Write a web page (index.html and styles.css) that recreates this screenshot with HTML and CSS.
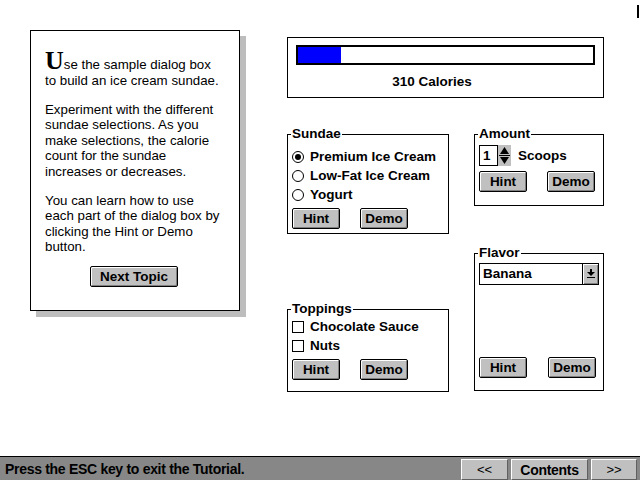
FILE: index.html
```html
<!DOCTYPE html>
<html>
<head>
<meta charset="utf-8">
<title>Ice Cream Sundae Tutorial</title>
<link rel="stylesheet" href="styles.css">
</head>
<body>
<div class="screen">
  <main class="stage">
    <section class="intro">
      <p><span class="dropcap">U</span>se the sample dialog box<br>to build an ice cream sundae.</p>
      <p>Experiment with the different<br>sundae selections. As you<br>make selections, the calorie<br>count for the sundae<br>increases or decreases.</p>
      <p class="last">You can learn how to use<br>each part of the dialog box by<br>clicking the Hint or Demo<br>button.</p>
      <button class="btn btn-wide">Next Topic</button>
    </section>

    <section class="workspace">
      <div class="calories">
        <div class="meter"><div class="meter-fill" style="width:14.6%"></div></div>
        <div class="calories-label">310 Calories</div>
      </div>

      <div class="groups">
        <div class="col col-left">
          <div class="group sundae">
            <span class="group-title">Sundae</span>
            <div class="option"><span class="radio checked"></span>Premium Ice Cream</div>
            <div class="option"><span class="radio"></span>Low-Fat Ice Cream</div>
            <div class="option"><span class="radio"></span>Yogurt</div>
            <div class="buttons"><button class="btn">Hint</button><button class="btn">Demo</button></div>
          </div>
          <div class="group toppings">
            <span class="group-title">Toppings</span>
            <div class="option"><span class="check"></span>Chocolate Sauce</div>
            <div class="option"><span class="check"></span>Nuts</div>
            <div class="buttons"><button class="btn">Hint</button><button class="btn">Demo</button></div>
          </div>
        </div>

        <div class="col col-right">
          <div class="group amount">
            <span class="group-title">Amount</span>
            <div class="spin-row">
              <span class="spin-edit">1</span>
              <span class="spinner">
                <svg width="13" height="21" viewBox="0 0 13 21"><polygon points="6.5,2 11,9 2,9" fill="#000"/><line x1="1" y1="10.5" x2="12" y2="10.5" stroke="#000" stroke-width="1"/><polygon points="2,12 11,12 6.5,19" fill="#000"/></svg>
              </span>
              <span class="spin-label">Scoops</span>
            </div>
            <div class="buttons buttons-amount"><button class="btn">Hint</button><button class="btn">Demo</button></div>
          </div>
          <div class="group flavor">
            <span class="group-title">Flavor</span>
            <div class="combo">
              <span class="combo-value">Banana</span>
              <span class="combo-btn">
                <svg width="8" height="10" viewBox="0 0 8 10"><rect x="3" y="0" width="2" height="3" fill="#000"/><polygon points="0,3 8,3 4,7" fill="#000"/><rect x="0" y="8" width="8" height="1" fill="#000"/></svg>
              </span>
            </div>
            <div class="buttons buttons-bottom"><button class="btn">Hint</button><button class="btn">Demo</button></div>
          </div>
        </div>
      </div>
    </section>
  </main>

  <footer class="statusbar">
    <span class="status-text">Press the ESC key to exit the Tutorial.</span>
    <nav class="nav">
      <button class="nav-btn nav-prev">&lt;&lt;</button>
      <button class="nav-btn nav-contents">Contents</button>
      <button class="nav-btn nav-next">&gt;&gt;</button>
    </nav>
  </footer>
</div>
<span class="caret"></span>
</body>
</html>
```

FILE: styles.css
```css
* { box-sizing: border-box; }
html, body { margin: 0; padding: 0; }
body {
  width: 640px;
  height: 480px;
  overflow: hidden;
  position: relative;
  background: #fff;
  color: #000;
  font-family: "Liberation Sans", Arial, sans-serif;
  font-size: 13px;
}
.screen { display: flex; flex-direction: column; height: 480px; }
.stage {
  height: 456px;
  display: flex;
  align-items: flex-start;
  gap: 47px;
  padding: 30px 0 0 30px;
}

/* Intro panel */
.intro {
  width: 210px;
  height: 281px;
  border: 1px solid #000;
  box-shadow: 6px 6px 0 #bdbdbd;
  padding: 26px 2px 0 14px;
  font-size: 13.3px;
  line-height: 15.5px;
  background: #fff;
}
.intro p { margin: 0 0 13.5px; white-space: nowrap; }
.intro p.last { margin-bottom: 11px; }
.dropcap {
  font-family: "Liberation Serif", "Times New Roman", serif;
  font-weight: bold;
  font-size: 26px;
  line-height: 0;
}

/* Buttons */
.btn {
  width: 48px;
  height: 21px;
  padding: 0;
  background: #c0c0c0;
  border: 1px solid #000;
  border-radius: 2px;
  box-shadow: inset 1px 1px 0 #fff, inset -1px -1px 0 #808080;
  font-family: "Liberation Sans", Arial, sans-serif;
  font-weight: bold;
  font-size: 13.5px;
  color: #000;
  display: flex;
  align-items: center;
  justify-content: center;
}
.btn-wide { width: 88px; margin-left: 45px; }

/* Workspace */
.workspace {
  width: 317px;
  padding-top: 7px;
  display: flex;
  flex-direction: column;
}
.calories {
  height: 61px;
  border: 1px solid #000;
  padding: 7px 8px 0;
}
.meter {
  height: 20px;
  border: 2px solid #000;
  background: #fff;
}
.meter-fill { height: 100%; background: #0000ff; }
.calories-label {
  margin-top: 9px;
  line-height: 16px;
  font-weight: bold;
  font-size: 13.5px;
  text-align: center;
  padding-right: 27px;
}

.groups { display: flex; gap: 25px; margin-top: 36px; font-size: 13.5px; }
.col { display: flex; flex-direction: column; }
.col-left { width: 162px; }
.col-right { width: 130px; }

.group {
  position: relative;
  border: 1px solid #000;
  padding-left: 4px;
}
.group-title {
  position: absolute;
  top: -9px;
  left: 3px;
  padding: 0 1px;
  background: #fff;
  font-weight: bold;
  line-height: 16px;
}
.sundae { height: 100px; padding-top: 12px; }
.toppings { height: 83px; margin-top: 75px; padding-top: 7px; }
.amount { height: 72px; padding-top: 10px; }
.flavor {
  height: 138px;
  margin-top: 47px;
  padding-top: 9px;
  padding-bottom: 12px;
  display: flex;
  flex-direction: column;
}

.option {
  display: flex;
  align-items: center;
  gap: 6px;
  height: 19px;
  font-weight: bold;
  white-space: nowrap;
}
.radio {
  position: relative;
  width: 12px;
  height: 12px;
  border: 1px solid #000;
  border-radius: 50%;
  background: #fff;
  flex: none;
}
.radio.checked::after {
  content: "";
  position: absolute;
  inset: 2px;
  border-radius: 50%;
  background: #000;
}
.check {
  width: 12px;
  height: 12px;
  border: 1px solid #000;
  background: #fff;
  flex: none;
}

.buttons { display: flex; gap: 20px; margin-top: 4px; }
.buttons-amount { margin-top: 5px; }
.buttons-bottom { margin-top: auto; gap: 21px; }

.spin-row { display: flex; align-items: center; height: 21px; }
.spin-edit {
  width: 19px;
  height: 21px;
  border: 1px solid #000;
  padding-left: 3px;
  font-weight: bold;
  line-height: 19px;
}
.spinner {
  width: 13px;
  height: 21px;
  background: #c0c0c0;
  display: flex;
}
.spin-label { margin-left: 7px; font-weight: bold; }

.combo {
  display: flex;
  width: 120px;
  height: 22px;
  border: 1px solid #000;
}
.combo-value {
  flex: 1;
  padding-left: 3px;
  font-weight: bold;
  line-height: 20px;
}
.combo-btn {
  width: 16px;
  background: #c0c0c0;
  border-left: 1px solid #000;
  box-shadow: inset 1px 1px 0 #fff, inset -1px -1px 0 #808080;
  display: flex;
  align-items: center;
  justify-content: center;
}

/* Status bar */
.statusbar {
  height: 24px;
  background: #878787;
  border-top: 1px solid #000;
  display: flex;
  align-items: center;
  padding-left: 5px;
}
.status-text {
  font-weight: bold;
  font-size: 14px;
  letter-spacing: -0.3px;
}
.nav {
  margin-left: auto;
  align-self: flex-end;
  display: flex;
  gap: 3px;
  padding-right: 3px;
}
.nav-btn {
  height: 21px;
  padding: 0;
  background: #c0c0c0;
  border: 1px solid;
  border-color: #fff #606060 #606060 #fff;
  font-family: "Liberation Sans", Arial, sans-serif;
  font-size: 13px;
  color: #000;
}
.nav-prev { width: 47px; }
.nav-contents { width: 77px; font-weight: bold; font-size: 14px; letter-spacing: -0.3px; }
.nav-next { width: 46px; }

.caret {
  position: absolute;
  top: 5px;
  left: 637px;
  width: 2px;
  height: 13px;
  background: #000;
}
```
